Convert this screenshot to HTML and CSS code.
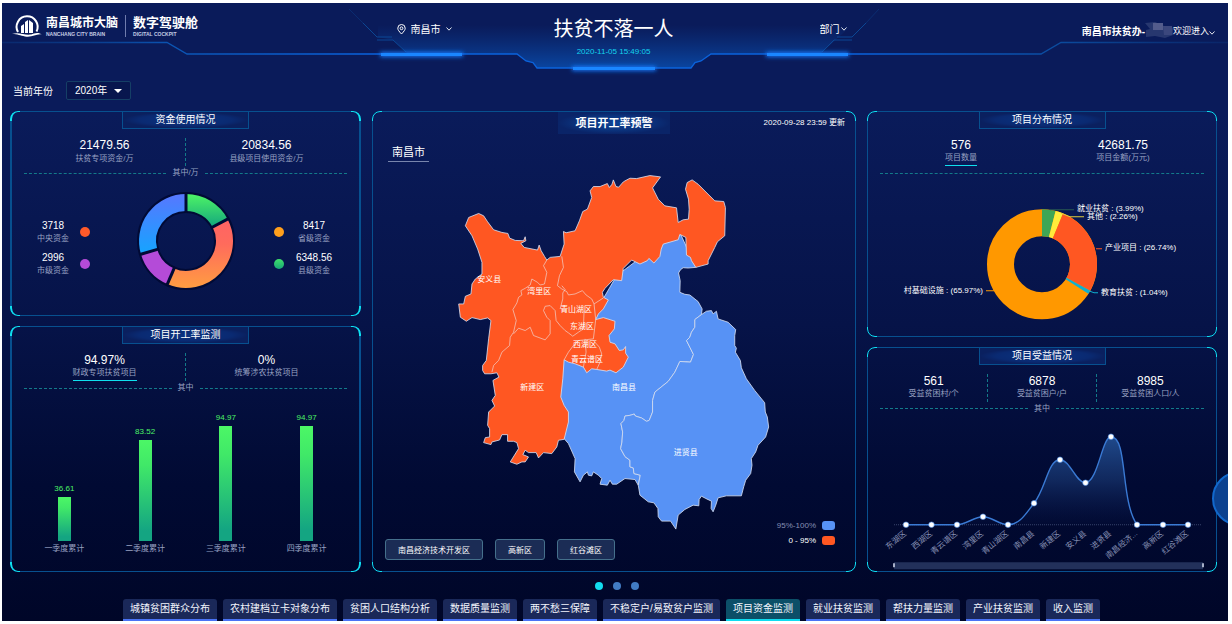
FILE: index.html
```html
<!DOCTYPE html>
<html lang="zh-CN">
<head>
<meta charset="utf-8">
<meta name="viewport" content="width=device-width, initial-scale=1">
<title>扶贫不落一人</title>
<link rel="stylesheet" href="styles.css">
</head>
<body>
<div class="screen">
  <header class="header">
    <svg class="header-art" viewBox="2 3 1226 80" preserveAspectRatio="none" aria-hidden="true">
      <defs>
        <linearGradient id="hdFill" x1="0" y1="25" x2="0" y2="68" gradientUnits="userSpaceOnUse">
          <stop offset="0" stop-color="#0a3f96" stop-opacity="0"/><stop offset="1" stop-color="#0a4aa8" stop-opacity=".9"/>
        </linearGradient>
        <linearGradient id="hdLine" x1="2" y1="0" x2="1228" y2="0" gradientUnits="userSpaceOnUse">
          <stop offset="0" stop-color="#0b3f8c" stop-opacity=".4"/><stop offset=".14" stop-color="#0b55b4"/><stop offset=".3" stop-color="#0a62dc"/>
          <stop offset=".7" stop-color="#0a62dc"/><stop offset=".86" stop-color="#0b4c9f"/><stop offset="1" stop-color="#0b3f8c" stop-opacity=".3"/>
        </linearGradient>
        <filter id="soft" x="-10%" y="-200%" width="120%" height="500%"><feGaussianBlur stdDeviation="2"/></filter>
      </defs>
      <path d="M378 25H852L820 54H711L701 61L695 63L691 68H537L533 62L526 61L517 54H408L393 40L378 37Z" fill="url(#hdFill)"/>
      <path d="M2 42.500H167L187 54H517L526 61L533 62.500L537 68H691L695 62.500L701 61L711 54H1041L1061 42.500H1228" fill="none" stroke="url(#hdLine)" stroke-width="1.300"/>
      <g fill="none" stroke="#0b4794">
        <path d="M349 9L363 23" opacity=".4"/><path d="M363 23L377 37H392M377 40H393L406 52"/>
        <path d="M879 9L866 23" opacity=".4"/><path d="M866 23L852 37H837M852 40H834L822 52"/>
      </g>
      <g fill="#1674f5" filter="url(#soft)"><path d="M380 52h83v5h-83zM572 66h84v5h-84zM766 52h83v5h-83z"/></g>
      <path d="M381 53h81v3h-81zM573 67h82v3h-82zM767 53h81v3h-81z" fill="#1a86ff"/>
    </svg>
    <div class="brand">
      <svg class="brand-mark" viewBox="0 0 30 24" aria-hidden="true">
        <path d="M6 18A10.500 10.500 0 1 1 24.500 17.500" fill="none" stroke="#fff" stroke-width="2"/>
        <path d="M9 19V12l3-2v9zM13 19V8l3-2v13zM17 19V6l4 3v10z" fill="#fff"/>
        <path d="M0 20C8 17 14 23 22 19.500C25 18.500 28 19 30 20.500C24 19.500 20 24 13 22.500C8 21.500 6 20 0 20Z" fill="#fff"/>
      </svg>
      <div class="brand-name"><strong>南昌城市大脑</strong><small>NANCHANG CITY BRAIN</small></div>
      <div class="brand-name brand-product"><strong>数字驾驶舱</strong><small>DIGITAL COCKPIT</small></div>
    </div>
    <div class="masthead">
      <label class="picker">
        <svg width="9" height="11" viewBox="0 0 9 11" aria-hidden="true"><path d="M4.500 10C2 7.300 .8 5.800.8 4.200a3.700 3.700 0 0 1 7.400 0C8.200 5.800 7 7.300 4.500 10Z" fill="none" stroke="#fff"/><circle cx="4.500" cy="4.300" r="1.400" fill="none" stroke="#fff"/></svg>
        <select aria-label="城市"><option>南昌市</option></select>
        <svg width="6" height="4" viewBox="0 0 6 4" aria-hidden="true"><path d="M.5.5L3 3.200L5.500.5" fill="none" stroke="#fff" stroke-width=".9"/></svg>
      </label>
      <div class="heading">
        <h1>扶贫不落一人</h1>
        <time>2020-11-05 15:49:05</time>
      </div>
      <label class="picker">
        <select aria-label="部门"><option>部门</option></select>
        <svg width="6" height="4" viewBox="0 0 6 4" aria-hidden="true"><path d="M.5.5L3 3.200L5.500.5" fill="none" stroke="#fff" stroke-width=".9"/></svg>
      </label>
    </div>
    <button class="user" type="button">
      <b>南昌市扶贫办-</b>
      <svg width="28" height="16" viewBox="0 0 28 16" aria-hidden="true"><path d="M0 1L10 0L19 4L28 6V13L20 16L10 14L1 15V8L5 7Z" fill="#27376f"/><path d="M8 1h10v7H8z" fill="#535c8c"/><path d="M18 4h9v9h-8z" fill="#3b477d"/></svg>
      <span>欢迎进入</span>
      <svg class="caret-low" width="6" height="4" viewBox="0 0 6 4" aria-hidden="true"><path d="M.5.5L3 3.200L5.500.5" fill="none" stroke="#fff" stroke-width=".9"/></svg>
    </button>
  </header>

  <div class="filters">
    <label for="year">当前年份</label>
    <span class="year-box">
      <select id="year"><option>2020年</option></select>
      <svg width="8" height="4" viewBox="0 0 8 4" aria-hidden="true"><path d="M0 0H8L4 4Z" fill="#fff"/></svg>
    </span>
  </div>

  <main class="board">
    <div class="column">
      <section class="panel panel-funds">
        <h2 class="panel-title">资金使用情况</h2>
        <div class="stats stats-split">
          <div class="stat"><b>21479.56</b><span>扶贫专项资金/万</span></div>
          <div class="stat"><b>20834.56</b><span>县级项目使用资金/万</span></div>
        </div>
        <div class="divider">其中/万</div>
        <div class="funds">
          <ul class="legend legend-left">
            <li><span class="legend-text"><b>3718</b>中央资金</span><i class="dot dot-red"></i></li>
            <li><span class="legend-text"><b>2996</b>市级资金</span><i class="dot dot-purple"></i></li>
          </ul>
          <svg class="donut" viewBox="0 0 100 100" role="img" aria-label="资金构成">
            <defs>
              <linearGradient id="gGreen" x1="0" y1="4" x2="0" y2="36" gradientUnits="userSpaceOnUse"><stop offset="0" stop-color="#4cf266"/><stop offset="1" stop-color="#13a67e"/></linearGradient>
              <linearGradient id="gOrange" x1="0" y1="30" x2="0" y2="96" gradientUnits="userSpaceOnUse"><stop offset="0" stop-color="#ff6464"/><stop offset=".35" stop-color="#ff6b5c"/><stop offset="1" stop-color="#ff9c42"/></linearGradient>
              <linearGradient id="gBlue" x1="0" y1="4" x2="0" y2="62" gradientUnits="userSpaceOnUse"><stop offset="0" stop-color="#5678ff"/><stop offset="1" stop-color="#16a4ff"/></linearGradient>
            </defs>
            <circle cx="50" cy="50" r="38.500" fill="none" stroke="#010a35" stroke-width="21"/>
            <g fill="none" stroke-width="17">
              <path d="M50 11.500A38.500 38.500 0 0 1 84.100 32.100" stroke="url(#gGreen)"/>
              <path d="M84.100 32.100A38.500 38.500 0 0 1 34.700 85.300" stroke="url(#gOrange)"/>
              <path d="M34.700 85.300A38.500 38.500 0 0 1 13.100 60.900" stroke="#b44bd8"/>
              <path d="M13.100 60.900A38.500 38.500 0 0 1 50 11.500" stroke="url(#gBlue)"/>
            </g>
            <g stroke="#010a35" stroke-width="3">
              <path d="M50 22V2"/><path d="M50 22V2" transform="rotate(62.300 50 50)"/><path d="M50 22V2" transform="rotate(203.400 50 50)"/><path d="M50 22V2" transform="rotate(253.600 50 50)"/>
            </g>
          </svg>
          <ul class="legend legend-right">
            <li><i class="dot dot-orange"></i><span class="legend-text"><b>8417</b>省级资金</span></li>
            <li><i class="dot dot-green"></i><span class="legend-text"><b>6348.56</b>县级资金</span></li>
          </ul>
        </div>
      </section>

      <section class="panel panel-progress">
        <h2 class="panel-title">项目开工率监测</h2>
        <div class="stats stats-split">
          <button class="stat is-active" type="button"><b>94.97%</b><span>财政专项扶贫项目</span></button>
          <button class="stat" type="button"><b>0%</b><span>统筹涉农扶贫项目</span></button>
        </div>
        <div class="divider">其中</div>
        <div class="bars">
          <div class="bar-group"><div class="bar-track"><div class="bar" style="height:36.61%"><span>36.61</span></div></div>一季度累计</div>
          <div class="bar-group"><div class="bar-track"><div class="bar" style="height:83.52%"><span>83.52</span></div></div>二季度累计</div>
          <div class="bar-group"><div class="bar-track"><div class="bar" style="height:94.97%"><span>94.97</span></div></div>三季度累计</div>
          <div class="bar-group"><div class="bar-track"><div class="bar" style="height:94.97%"><span>94.97</span></div></div>四季度累计</div>
        </div>
      </section>
    </div>

    <section class="panel panel-map">
      <div class="map-head">
        <h2 class="map-title">项目开工率预警</h2>
        <span class="updated">2020-09-28 23:59 更新</span>
      </div>
      <div class="map-stage">
        <svg class="map" viewBox="373 133 482 438" role="img" aria-label="南昌市项目开工率地图">
          <g transform="translate(450 165) scale(.33333)" stroke="#d5def2" stroke-width="2.500" stroke-linejoin="round">
            <path fill="#5792f5" d="M738 305L715 307L700 306L692 312L686 322L691 345L690 380L705 386L720 388L745 408L757 430L755 447L735 462L735 485L725 500L720 515L710 525L720 545L731 567L722 590L690 588L675 620L655 648L615 680L608 705L608 740L598 765L590 768L575 758L556 752L553 746L540 750L525 752L522 765L513 775L518 800L516 830L512 850L525 874L540 885L540 905L550 908L552 925L571 930L565 960L555 943L525 940L500 957L487 957L480 945L472 960L450 957L455 940L445 930L430 920L425 932L415 930L412 920L400 930L390 950L373 920L375 880L355 835L342 820L300 700L342 580L420 500L430 450L500 330L640 225L690 200Z"/>
            <path fill="#5792f5" d="M755 447L770 437L785 435L790 445L800 437L805 460L835 470L858 492L855 510L855 540L860 548L857 560L872 585L875 607L890 640L915 675L945 712L947 740L953 755L957 785L948 815L925 840L918 860L905 880L907 900L903 925L888 945L882 965L875 992L830 992L805 998L798 1020L790 1040L784 1030L785 1008L768 1000L755 993L748 1003L747 1022L730 1020L705 1033L685 1050L678 1092L662 1068L635 1068L625 1055L624 1030L612 1013L595 1010L570 990L565 960L571 930L552 925L550 908L540 905L540 885L525 874L512 850L516 830L518 800L513 775L522 765L525 752L540 750L553 746L556 752L575 758L590 768L598 765L608 740L608 705L615 680L655 648L675 620L690 588L722 590L731 567L720 545L710 525L720 515L725 500L735 485L735 462Z"/>
            <path fill="#ff5722" d="M45 180L55 155L85 143L100 150L112 168L130 192L155 200L173 203L178 217L195 224L220 225L225 213L227 225L212 233L222 245L262 253L267 238L273 255L283 272L290 283L300 275L330 272L342 235L340 197L348 201L375 195L388 165L398 137L412 130L425 95L420 75L430 62L450 62L472 53L478 65L486 55L490 42L498 62L506 64L520 48L525 45L540 37L560 38L600 29L632 33L608 66L625 100L645 120L680 126L685 170L700 162L716 160L718 130L716 100L707 70L712 50L727 42L745 55L795 105L822 107L827 125L825 210L803 228L795 245L775 285L775 295L738 305L725 285L722 275L710 268L708 215L690 206L685 222L640 235L634 250L630 272L612 292L597 278L592 285L570 295L545 283L520 308L515 345L490 342L465 368L457 380L460 395L475 403L460 430L445 445L437 462L460 456L495 467L493 490L477 510L480 530L495 535L508 555L520 553L527 543L527 563L535 575L520 605L498 622L480 614L470 617L440 612L425 610L410 622L400 605L375 595L355 590L342 583L338 640L332 695L342 720L355 740L355 770L342 822L325 825L320 845L305 865L280 862L265 878L258 862L235 862L225 855L218 868L235 875L225 890L215 890L200 897L180 890L205 850L200 832L190 828L172 828L172 808L155 808L148 824L125 830L122 838L100 832L105 817L118 815L118 790L112 780L115 740L133 722L125 705L135 690L128 645L146 635L140 622L122 625L103 625L97 615L97 600L108 585L115 520L122 465L112 457L90 462L65 456L48 467L30 455L25 415L40 415L45 392L62 385L65 355L75 340L95 325L95 290L82 250L65 210Z"/>
          </g>
          <g transform="translate(450 165) scale(.33333)" fill="none" stroke="#f0d8d4" stroke-width="2">
            <path d="M290 283L280 300L290 320L283 355L270 358L262 350L245 340L240 358L225 368L212 375L215 388L205 395L200 412L188 432L198 465L190 500L180 515L178 540L155 560L145 585L130 600L125 620"/>
            <path d="M190 505L205 488L225 495L240 485L250 510L285 523L300 505L300 465L290 455L280 435L285 422L300 420L315 435L318 465L330 480L345 495L355 502L368 512"/>
            <path d="M335 272L340 305L328 330L322 360L335 370L350 378L355 388L375 385L397 375L408 388L425 400L432 415L460 397"/>
            <path d="M335 360L345 372L338 382L338 400L330 430M368 512L385 500L400 490L402 435M432 415L437 462L430 520L385 525L370 540L355 560L342 583M405 520L408 560L400 605M430 525L448 545L455 565L450 590L440 612"/>
          </g>
          <g class="map-labels">
            <text x="489" y="281">安义县</text><text x="539" y="293">湾里区</text><text x="576" y="311">青山湖区</text><text x="582" y="328">东湖区</text>
            <text x="585" y="346">西湖区</text><text x="587" y="362">青云谱区</text><text x="532" y="390">新建区</text><text x="624" y="390">南昌县</text><text x="686" y="455">进贤县</text>
          </g>
        </svg>
        <span class="region">南昌市</span>
        <div class="map-foot">
          <div class="zones">
            <button type="button">南昌经济技术开发区</button><button type="button">高新区</button><button type="button">红谷滩区</button>
          </div>
          <ul class="scale">
            <li class="muted">95%-100%<i class="swatch swatch-blue"></i></li>
            <li>0 - 95%<i class="swatch swatch-red"></i></li>
          </ul>
        </div>
      </div>
    </section>

    <div class="column">
      <section class="panel panel-half">
        <h2 class="panel-title">项目分布情况</h2>
        <div class="stats">
          <button class="stat is-active" type="button"><b>576</b><span>项目数量</span></button>
          <button class="stat" type="button"><b>42681.75</b><span>项目金额(万元)</span></button>
        </div>
        <div class="divider divider-plain"></div>
        <svg class="chart" viewBox="868 179 348 156" role="img" aria-label="项目分布">
          <g fill="none" stroke-width="27" transform="rotate(-90 1042 264)">
            <circle cx="1042" cy="264" r="41.500" pathLength="100" stroke="#ff9800"/>
            <circle cx="1042" cy="264" r="41.500" pathLength="100" stroke="#3fa655" stroke-dasharray="3.990 100"/>
            <circle cx="1042" cy="264" r="41.500" pathLength="100" stroke="#ffeb3b" stroke-dasharray="2.260 100" stroke-dashoffset="-3.990"/>
            <circle cx="1042" cy="264" r="41.500" pathLength="100" stroke="#ff5722" stroke-dasharray="26.740 100" stroke-dashoffset="-6.250"/>
            <circle cx="1042" cy="264" r="41.500" pathLength="100" stroke="#0fb0cf" stroke-dasharray="1.040 100" stroke-dashoffset="-32.990"/>
          </g>
          <g fill="none">
            <path d="M1050 209.500H1074" stroke="#285a52"/><path d="M1061 213L1070 216.500H1084" stroke="#e0cf3f"/>
            <path d="M1096 248.500H1102" stroke="#ff5722"/><path d="M1090 291L1094 292.500H1098" stroke="#0fb0cf"/><path d="M994 290.500H986" stroke="#ff9800"/>
          </g>
          <g class="pie-labels">
            <text x="1077" y="211">就业扶贫 : (3.99%)</text><text x="1087" y="219">其他 : (2.26%)</text>
            <text x="1105" y="250">产业项目 : (26.74%)</text><text x="1101" y="295">教育扶贫 : (1.04%)</text>
            <text x="983" y="293" text-anchor="end">村基础设施 : (65.97%)</text>
          </g>
        </svg>
      </section>

      <section class="panel panel-half">
        <h2 class="panel-title">项目受益情况</h2>
        <div class="stats stats-split">
          <div class="stat"><b>561</b><span>受益贫困村/个</span></div>
          <div class="stat"><b>6878</b><span>受益贫困户/户</span></div>
          <div class="stat"><b>8985</b><span>受益贫困人口/人</span></div>
        </div>
        <div class="divider">其中</div>
        <svg class="chart" viewBox="868 415 348 156" role="img" aria-label="各县区受益情况">
          <defs><linearGradient id="gArea" x1="0" y1="436" x2="0" y2="524" gradientUnits="userSpaceOnUse"><stop offset="0" stop-color="#235196" stop-opacity=".9"/><stop offset=".5" stop-color="#17356f" stop-opacity=".7"/><stop offset="1" stop-color="#0c1c50" stop-opacity=".1"/></linearGradient></defs>
          <path d="M894 524.500H1202" stroke="#39456b" stroke-dasharray="1 1"/>
          <path d="M906 524.500H957C966 524.500 974 516.500 983 516.500S999 524.500 1008 524.500C1020 524.500 1026 513 1034 503C1046 488 1048 459.500 1060 459.500C1070 459.500 1076 482.500 1085 482.500C1098 482.500 1102 436.500 1111 436.500C1128 436.500 1120 500 1137 524.500Z" fill="url(#gArea)"/>
          <path d="M906 524.500H957C966 524.500 974 516.500 983 516.500S999 524.500 1008 524.500C1020 524.500 1026 513 1034 503C1046 488 1048 459.500 1060 459.500C1070 459.500 1076 482.500 1085 482.500C1098 482.500 1102 436.500 1111 436.500C1128 436.500 1120 500 1137 524.500H1188" fill="none" stroke="#3a7ad4" stroke-width="1.400"/>
          <g fill="#fff" stroke="#4f8fe6" stroke-width=".6">
            <circle cx="906" cy="524.500" r="2.800"/><circle cx="931.500" cy="524.500" r="2.800"/><circle cx="957" cy="524.500" r="2.800"/><circle cx="983" cy="516.500" r="2.800"/><circle cx="1008" cy="524.500" r="2.800"/><circle cx="1034" cy="503" r="2.800"/><circle cx="1060" cy="459.500" r="2.800"/><circle cx="1085.500" cy="482.500" r="2.800"/><circle cx="1111" cy="436.500" r="2.800"/><circle cx="1137" cy="524.500" r="2.800"/><circle cx="1163" cy="524.500" r="2.800"/><circle cx="1188" cy="524.500" r="2.800"/>
          </g>
          <g class="axis-labels">
            <text transform="translate(907 534) rotate(-40)">东湖区</text><text transform="translate(933 534) rotate(-40)">西湖区</text><text transform="translate(958 534) rotate(-40)">青云谱区</text><text transform="translate(984 534) rotate(-40)">湾里区</text>
            <text transform="translate(1009 534) rotate(-40)">青山湖区</text><text transform="translate(1035 534) rotate(-40)">南昌县</text><text transform="translate(1061 534) rotate(-40)">新建区</text><text transform="translate(1087 534) rotate(-40)">安义县</text>
            <text transform="translate(1112 534) rotate(-40)">进贤县</text><text transform="translate(1138 534) rotate(-40)">南昌经济...</text><text transform="translate(1164 534) rotate(-40)">高新区</text><text transform="translate(1189 534) rotate(-40)">红谷滩区</text>
          </g>
          <path d="M894 562H1203V569H894Z" fill="#22305a"/>
          <path d="M893 563h2v4h-2zM1202 563h2v4h-2z" fill="#a7afc8"/>
        </svg>
      </section>
    </div>
  </main>

  <div class="pager">
    <button class="is-current" type="button" aria-label="第1页"></button><button type="button" aria-label="第2页"></button><button type="button" aria-label="第3页"></button>
  </div>
  <nav class="tabs">
    <a href="#">城镇贫困群众分布</a><a href="#">农村建档立卡对象分布</a><a href="#">贫困人口结构分析</a><a href="#">数据质量监测</a><a href="#">两不愁三保障</a><a href="#">不稳定户/易致贫户监测</a><a href="#" class="is-current" aria-current="page">项目资金监测</a><a href="#">就业扶贫监测</a><a href="#">帮扶力量监测</a><a href="#">产业扶贫监测</a><a href="#">收入监测</a>
  </nav>
  <button class="float-ball" type="button" aria-label="展开"></button>
</div>
</body>
</html>
```
FILE: styles.css
```css
* { box-sizing: border-box; }

body {
  margin: 0;
  background: #fff;
  color: #fff;
  font-family: "Liberation Sans", "Noto Sans CJK SC", sans-serif;
  font-size: 8px;
}

button, select {
  margin: 0;
  padding: 0;
  border: 0;
  background: none;
  color: inherit;
  font: inherit;
}

select { appearance: none; outline: 0; }
select option { color: #0a1b5a; }
button { cursor: pointer; }
h1, h2, ul { margin: 0; padding: 0; font-weight: 400; list-style: none; }

.screen {
  position: relative;
  display: flex;
  flex-direction: column;
  min-height: calc(100vh - 6px);
  margin: 3px 4px 3px 2px;
  overflow: hidden;
  background: linear-gradient(#0a1b5a 0%, #0a1b5a 18%, #061348 52%, #010a33 78%, #000628 100%);
}

/* header */
.header {
  position: relative;
  display: grid;
  grid-template-columns: 1fr auto 1fr;
  align-items: start;
  height: 78px;
  padding: 11px 13px 0 10px;
}

.header-art {
  position: absolute;
  top: 0;
  left: 0;
  width: 100%;
  height: 80px;
}

.brand, .masthead, .user { position: relative; }

.brand { display: flex; align-items: center; }
.brand-mark { width: 30px; height: 24px; margin-right: 4px; }
.brand-name { display: flex; flex-direction: column; }
.brand-name strong { font-size: 12px; line-height: 16px; }
.brand-name small { font-size: 5px; font-weight: 700; line-height: 6px; color: #c5cce4; }
.brand-product { margin-left: 7px; padding-left: 7px; border-left: 1px solid #6f7cae; }
.brand-product strong { font-size: 13px; }

.masthead {
  display: flex;
  justify-content: space-between;
  width: 466px;
  padding-left: 16px;
}

.picker { display: flex; align-items: center; gap: 5px; height: 30px; font-size: 10px; }
.picker:last-child { gap: 1px; }
.heading { position: absolute; left: 0; right: 0; width: max-content; margin: 0 auto; text-align: center; }
.heading h1 { font-size: 20px; line-height: 30px; }
.heading time { display: block; margin-top: 3px; line-height: 10px; color: #14d3ee; }

.user { display: flex; align-items: center; justify-self: end; height: 32px; font-size: 9px; }
.user b { font-size: 10px; }
.caret-low { margin-top: 6px; }

/* year filter */
.filters {
  display: flex;
  align-items: center;
  gap: 13px;
  height: 19px;
  padding-left: 11px;
  font-size: 10px;
}

.year-box {
  display: flex;
  align-items: center;
  gap: 6px;
  height: 19px;
  padding: 0 8px;
  border: 1px solid #153f66;
  border-radius: 2px;
  background: #08164e;
}

/* board */
.board {
  flex: 1;
  display: grid;
  grid-template-columns: 351fr 484fr 350fr;
  gap: 11px;
  padding: 11px 11px 0 8px;
}

.column { display: flex; flex-direction: column; gap: 10px; min-height: 0; }

.panel {
  position: relative;
  display: flex;
  flex-direction: column;
  min-width: 0;
  border: 1px solid #07508f;
  border-radius: 8px;
}

.panel::after {
  content: "";
  position: absolute;
  inset: -1px;
  border: 1px solid #0fe0ee;
  border-radius: 8px;
  pointer-events: none;
  mask:
    linear-gradient(#000 0 0) 0 0 / 10px 10px no-repeat,
    linear-gradient(#000 0 0) 100% 0 / 10px 10px no-repeat,
    linear-gradient(#000 0 0) 0 100% / 10px 10px no-repeat,
    linear-gradient(#000 0 0) 100% 100% / 10px 10px no-repeat;
}

.panel-funds, .panel-progress { border-width: 1px 2px; }
.panel-funds::after, .panel-progress::after { inset: -1px -2px; border-width: 1px 2px; }
.panel-funds { flex: 205 1 0; }
.panel-progress { flex: 246 1 0; }
.panel-half { flex: 1 1 0; }

.panel-title {
  align-self: center;
  width: 127px;
  height: 18px;
  margin: -1px 0 9px;
  border: 1px solid #07508f;
  background: radial-gradient(closest-side, #0a3380, #0a2a72 75%, #0a205f);
  font-size: 10px;
  line-height: 16px;
  text-align: center;
}

.stats { display: flex; height: 28px; margin: 0 12px; }

.stat {
  flex: 1 1 0;
  display: flex;
  flex-direction: column;
  align-items: center;
  color: #98a1c2;
}

.stat b { font-size: 12px; font-weight: 400; line-height: 14px; color: #fff; }
.stat span { line-height: 12px; padding-bottom: 1px; border-bottom: 1px solid transparent; }
.stat.is-active span { border-bottom-color: #0fe0ee; }
.stats-split .stat + .stat { border-left: 1px dashed #137a8a; }

.divider {
  display: flex;
  align-items: center;
  gap: 6px;
  height: 12px;
  margin: 1px 12px 0;
  line-height: 12px;
  color: #98a1c2;
}

.divider::before, .divider::after { content: ""; flex: 1; border-top: 1px dashed #137a8a; }
.divider-plain { gap: 0; }

.chart { flex: 1 1 0; width: 100%; min-height: 0; }
.pie-labels text { fill: #fff; }

.axis-labels text { fill: #8690b4; text-anchor: end; }

/* funds */
.panel-funds .stat span { line-height: 14px; padding: 0; }

.funds {
  flex: 1;
  display: flex;
  align-items: center;
  justify-content: space-between;
  padding: 0 21px 12px;
}

.donut { width: 100px; height: 100px; }
.legend { display: flex; flex-direction: column; gap: 6px; width: 90px; margin-top: 14px; }
.legend li { display: flex; align-items: center; gap: 7px; height: 26px; }
.legend-right { padding-left: 26px; }
.legend-text { width: 40px; line-height: 12px; text-align: center; color: #98a1c2; }
.legend-right .legend-text { width: 46px; }
.legend-text b { display: block; font-size: 10px; font-weight: 400; line-height: 14px; color: #fff; }
.dot { width: 10px; height: 10px; border-radius: 50%; }
.dot-red { background: #ff5a2a; }
.dot-purple { background: #b44bd8; }
.dot-orange { background: #ff9f1c; }
.dot-green { background: linear-gradient(#3fe06a, #18a878); }

/* bars */
.bars { flex: 1; display: flex; margin: 26px 12px 14px; }
.bar-group { flex: 1; display: flex; flex-direction: column; align-items: center; line-height: 16px; color: #98a1c2; }
.bar-track { flex: 1; display: flex; align-items: flex-end; width: 13px; }
.bar { position: relative; width: 100%; background: linear-gradient(#4cf766, #40e868 25%, #14a582 90%); }
.bar span { position: absolute; bottom: 100%; left: 50%; transform: translateX(-50%); color: #4cf266; }

/* map */
.map-head { position: relative; display: flex; justify-content: center; }

.map-title {
  width: 112px;
  height: 22px;
  background: radial-gradient(closest-side, #0c4194, #0b3580 60%, #0a2468);
  font-size: 11px;
  font-weight: 700;
  line-height: 22px;
  text-align: center;
}

.updated { position: absolute; right: 10px; line-height: 22px; }
.map-stage { flex: 1; display: grid; grid-template: minmax(0, 1fr) / minmax(0, 1fr); min-height: 0; }
.map-stage > * { grid-area: 1 / 1; }
.map { width: 100%; height: 0; min-height: 100%; }
.map-labels text { fill: #fff; text-anchor: middle; }

.region {
  place-self: start;
  margin: 10px 15px;
  padding: 0 4px;
  border-bottom: 1px solid #7885ad;
  font-size: 11px;
  line-height: 17px;
}

.map-foot {
  align-self: end;
  display: flex;
  align-items: flex-end;
  justify-content: space-between;
  padding: 0 20px 11px 12px;
}

.zones { display: flex; gap: 12px; }

.zones button {
  height: 21px;
  padding: 0 12px;
  border: 1px solid #45708c;
  border-radius: 3px;
  background: #1b2c55;
}

.scale { display: flex; flex-direction: column; gap: 3px; margin-bottom: 14px; }
.scale li { display: flex; align-items: center; justify-content: flex-end; gap: 6px; height: 12px; }
.scale .muted { color: #8690b4; }
.swatch { width: 13px; height: 9px; border-radius: 3px; }
.swatch-blue { background: #5792f5; }
.swatch-red { background: #ff5722; }

/* bottom navigation */
.pager { display: flex; justify-content: center; gap: 10px; height: 27px; padding: 10px 0 0 4px; }
.pager button { width: 8px; height: 8px; border-radius: 50%; background: #427cc4; }
.pager .is-current { background: #12dcf0; }

.tabs { display: flex; justify-content: center; gap: 6px; padding-right: 7px; }

.tabs a {
  flex: none;
  height: 22px;
  padding: 0 7px;
  border-bottom: 2px solid #4a73f5;
  border-radius: 3px 3px 0 0;
  background: #1a2859;
  color: #f2f5fc;
  font-size: 10px;
  line-height: 20px;
  text-decoration: none;
}

.tabs .is-current { border-color: #0fdcf0; background: #0c4f68; }

.float-ball {
  position: absolute;
  right: -39px;
  bottom: 95px;
  width: 55px;
  height: 55px;
  border: 2px solid #1268cc;
  border-radius: 50%;
  background: #0c418f;
}
```
